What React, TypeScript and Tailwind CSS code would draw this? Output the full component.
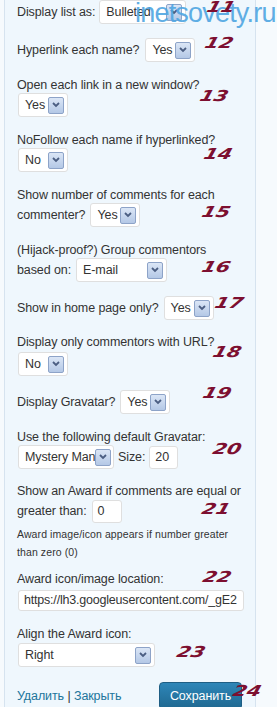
import React from "react";

type SelectProps = { value: string; w: string };

function Arrow() {
  return (
    <span className="flex h-[17px] w-[16px] shrink-0 items-center justify-center rounded-[2px] border border-[#8da3c8] bg-gradient-to-b from-[#dbe6f6] to-[#b4c8e6]">
      <svg width="8" height="6" viewBox="0 0 8 6">
        <polyline points="1,1 4,4 7,1" fill="none" stroke="#4b5e82" strokeWidth="1.8" />
      </svg>
    </span>
  );
}

function Select({ value, w }: SelectProps) {
  return (
    <span className={`inline-flex h-[24px] shrink-0 items-center justify-between whitespace-nowrap rounded-[3px] border border-[#dfdfdf] bg-white pl-[6px] pr-[3px] align-middle ${w}`}>
      <span>{value}</span>
      <Arrow />
    </span>
  );
}

function Input({ value, w }: SelectProps) {
  return (
    <span className={`inline-flex h-[23px] shrink-0 items-center rounded-[3px] border border-[#dfdfdf] bg-white pl-[5px] align-middle ${w}`}>
      {value}
    </span>
  );
}

const num = "absolute font-['DejaVu_Sans',sans-serif] text-[15px] font-bold italic leading-none text-[#7d0f30] origin-left scale-x-[1.35] -skew-x-12 pointer-events-none";

export default function App() {
  return (
    <div className="relative flex h-[707px] w-[277px] overflow-hidden bg-[#f6fafd] font-['Liberation_Sans',Arial,sans-serif] text-[12.5px] tracking-[-0.1px] text-[#333]">
      <div className="ml-[4px] h-full w-[252px] border-x border-[#d6e3ef] bg-[#eff7fd] pl-[12px]">
        {/* 11 */}
        <div className="flex h-[24px] items-center gap-[4px]">
          <span>Display list as:</span>
          <Select value="Bulleted" w="w-[87px]" />
        </div>

        {/* 12 */}
        <div className="mt-[14px] flex h-[24px] items-center gap-[6px]">
          <span>Hyperlink each name?</span>
          <Select value="Yes" w="w-[50px]" />
        </div>

        {/* 13 */}
        <div className="mt-[15px] leading-[16px]">Open each link in a new window?</div>
        <div className="ml-[1px] flex">
          <Select value="Yes" w="w-[50px]" />
        </div>

        {/* 14 */}
        <div className="mt-[15px] leading-[16px]">NoFollow each name if hyperlinked?</div>
        <div className="ml-[1px] flex">
          <Select value="No" w="w-[50px]" />
        </div>

        {/* 15 */}
        <div className="mt-[15px] leading-[16px]">Show number of comments for each</div>
        <div className="flex h-[24px] items-center gap-[5px]">
          <span>commenter?</span>
          <Select value="Yes" w="w-[50px]" />
        </div>

        {/* 16 */}
        <div className="mt-[15px] leading-[16px]">(Hijack-proof?) Group commentors</div>
        <div className="flex h-[24px] items-center gap-[5px]">
          <span>based on:</span>
          <Select value="E-mail" w="w-[91px]" />
        </div>

        {/* 17 */}
        <div className="mt-[14px] flex h-[24px] items-center gap-[5px]">
          <span>Show in home page only?</span>
          <Select value="Yes" w="w-[50px]" />
        </div>

        {/* 18 */}
        <div className="mt-[14px] leading-[16px]">Display only commentors with URL?</div>
        <div className="ml-[1px] mt-[2px] flex">
          <Select value="No" w="w-[50px]" />
        </div>

        {/* 19 */}
        <div className="mt-[14px] flex h-[24px] items-center gap-[5px]">
          <span>Display Gravatar?</span>
          <Select value="Yes" w="w-[50px]" />
        </div>

        {/* 20 */}
        <div className="mt-[15px] leading-[16px]">Use the following default Gravatar:</div>
        <div className="ml-[1px] flex h-[24px] items-center gap-[4px]">
          <Select value="Mystery Man" w="w-[96px]" />
          <span>Size:</span>
          <Input value="20" w="w-[29px]" />
        </div>

        {/* 21 */}
        <div className="mt-[14px] leading-[16px]">Show an Award if comments are equal or</div>
        <div className="flex h-[24px] items-center gap-[5px]">
          <span>greater than:</span>
          <Input value="0" w="w-[30px]" />
        </div>
        <div className="mt-[2px] pr-[14px] text-[10.5px] leading-[18px] tracking-[0.1px]">
          Award image/icon appears if number greater than zero (0)
        </div>

        {/* 22 */}
        <div className="mt-[10px] leading-[16px]">Award icon/image location:</div>
        <div className="ml-[1px] mt-[3px] flex">
          <span className="inline-flex h-[21px] w-[226px] items-center overflow-hidden whitespace-nowrap rounded-[3px] border border-[#dfdfdf] bg-white pl-[5px] tracking-[-0.2px]">
            https://lh3.googleusercontent.com/_gE2
          </span>
        </div>

        {/* 23 */}
        <div className="mt-[15px] leading-[16px]">Align the Award icon:</div>
        <div className="ml-[1px] mt-[1px] flex">
          <Select value="Right" w="w-[137px]" />
        </div>

        {/* 24 */}
        <div className="mt-[15px] flex h-[28px] items-center justify-between pr-[13px]">
          <span>
            <a className="text-[#21759b]">Удалить</a> | <a className="text-[#21759b]">Закрыть</a>
          </span>
          <button className="h-[28px] w-[83px] rounded-[4px] border border-[#1e5e84] bg-gradient-to-b from-[#2e86b8] to-[#1f6890] text-[12.5px] text-white">
            Сохранить
          </button>
        </div>
      </div>

      {/* watermark */}
      <div className="pointer-events-none absolute left-[135px] top-[-7px] text-[27px] tracking-[-0.8px] text-[#4fa6e2] opacity-90">
        inetsovety.ru
      </div>

      {/* annotations */}
      <span className={`${num} left-[207px] top-[0px]`}>11</span>
      <span className={`${num} left-[205px] top-[36px]`}>12</span>
      <span className={`${num} left-[200px] top-[89px]`}>13</span>
      <span className={`${num} left-[204px] top-[147px]`}>14</span>
      <span className={`${num} left-[202px] top-[205px]`}>15</span>
      <span className={`${num} left-[202px] top-[260px]`}>16</span>
      <span className={`${num} left-[215px] top-[296px]`}>17</span>
      <span className={`${num} left-[213px] top-[345px]`}>18</span>
      <span className={`${num} left-[203px] top-[386px]`}>19</span>
      <span className={`${num} left-[213px] top-[442px]`}>20</span>
      <span className={`${num} left-[202px] top-[502px]`}>21</span>
      <span className={`${num} left-[203px] top-[570px]`}>22</span>
      <span className={`${num} left-[177px] top-[645px]`}>23</span>
      <span className={`${num} left-[233px] top-[684px]`}>24</span>
    </div>
  );
}
